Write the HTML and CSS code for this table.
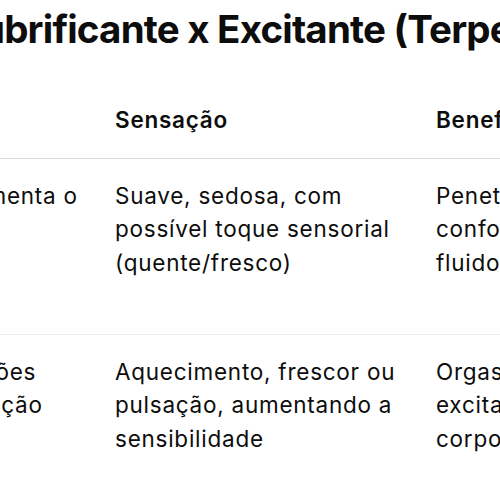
FILE: index.html
```html
<!DOCTYPE html>
<html lang="pt">
<head>
<meta charset="utf-8">
<link rel="stylesheet" href="styles.css">
</head>
<body>
<main class="page">
  <h1 class="title">Lubrificante x Excitante (Terpenos)</h1>
  <div class="table-scroll">
    <table class="compare">
      <thead>
        <tr>
          <th>Função</th>
          <th>Sensação</th>
          <th>Benefícios</th>
          <th>Exemplo</th>
        </tr>
      </thead>
      <tbody>
        <tr>
          <td>Reduz atrito e aumenta o conforto</td>
          <td>Suave, sedosa, com possível toque sensorial (quente/fresco)</td>
          <td>Penetração facilitada,<br>conforto e menos atrito,<br>fluidos prolongados</td>
          <td>Gel à base de água<br>ou silicone, com<br>extrato natural de<br>terpenos</td>
        </tr>
        <tr>
          <td>Estimula terminações nervosas e circulação</td>
          <td>Aquecimento, frescor ou pulsação, aumentando a sensibilidade</td>
          <td>Orgasmos mais intensos,<br>excitação prolongada,<br>corpo mais desperto</td>
          <td>Gel excitante com<br>mentol, canela ou<br>gengibre, de efeito<br>rápido</td>
        </tr>
      </tbody>
    </table>
  </div>
</main>
</body>
</html>
```
FILE: styles.css
```css
html, body {
  margin: 0;
  padding: 0;
  background: #ffffff;
  overflow: hidden;
}
body {
  width: 500px;
  height: 500px;
  font-family: Inter, "Noto Sans", sans-serif;
  color: #0d0d0d;
}
.page {
  margin-left: -40px;
}
.title {
  margin: 0;
  padding-top: 5px;
  font-size: 38.5px;
  line-height: 48px;
  font-weight: 700;
  white-space: nowrap;
  letter-spacing: -0.8px;
}
.table-scroll {
  margin-left: -182px;
  margin-top: 29px;
}
.compare {
  border-collapse: collapse;
  table-layout: fixed;
  width: 1284px;
  font-size: 22.5px;
  line-height: 33.5px;
  letter-spacing: 0.75px;
}
.compare th,
.compare td {
  width: 321px;
  text-align: left;
  vertical-align: top;
  box-sizing: border-box;
}
.compare th {
  padding: 21px 16px;
  font-weight: 600;
  border-bottom: 1px solid #d9d9d9;
}
.compare td {
  padding: 20px 16px 21px;
  font-weight: 400;
  border-bottom: 1px solid #ececec;
}
```
